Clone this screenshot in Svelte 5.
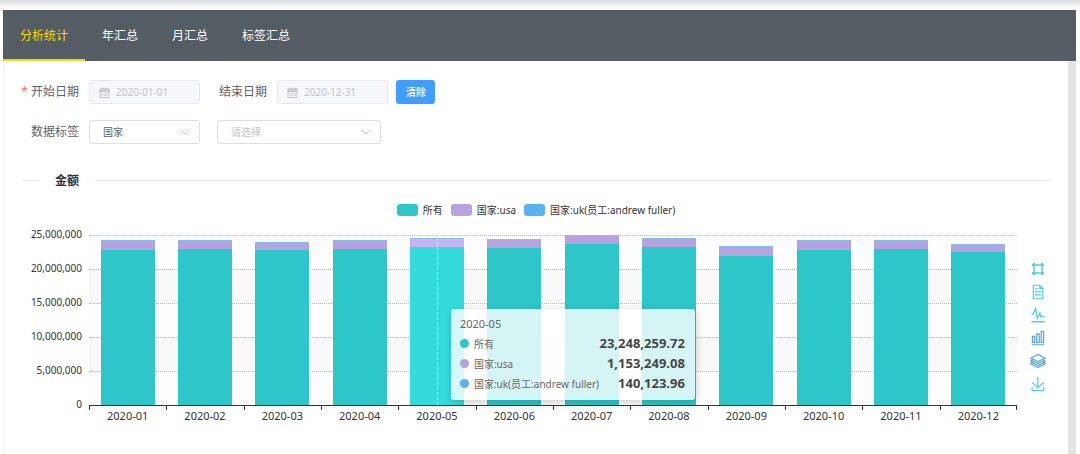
<script>
  const tabs = ['分析统计', '年汇总', '月汇总', '标签汇总'];
  let active = $state(0);

  const series = [
    { key: 'all', name: '所有', value: '23,248,259.72' },
    { key: 'usa', name: '国家:usa', value: '1,153,249.08' },
    { key: 'uk', name: '国家:uk(员工:andrew fuller)', value: '140,123.96' }
  ];

  const max = 25;
  const ticks = ['25,000,000', '20,000,000', '15,000,000', '10,000,000', '5,000,000', '0'];

  // values in millions
  const months = [
    { label: '2020-01', all: 22.84, usa: 1.22, uk: 0.16 },
    { label: '2020-02', all: 22.95, usa: 1.13, uk: 0.16 },
    { label: '2020-03', all: 22.75, usa: 1.15, uk: 0.14 },
    { label: '2020-04', all: 22.93, usa: 1.2, uk: 0.14 },
    { label: '2020-05', all: 23.25, usa: 1.15, uk: 0.14 },
    { label: '2020-06', all: 23.1, usa: 1.2, uk: 0.14 },
    { label: '2020-07', all: 23.75, usa: 1.1, uk: 0.14 },
    { label: '2020-08', all: 23.27, usa: 1.13, uk: 0.16 },
    { label: '2020-09', all: 21.98, usa: 1.2, uk: 0.14 },
    { label: '2020-10', all: 22.86, usa: 1.2, uk: 0.14 },
    { label: '2020-11', all: 22.95, usa: 1.15, uk: 0.14 },
    { label: '2020-12', all: 22.45, usa: 1.1, uk: 0.14 }
  ];
  const hovered = 4;
  const pct = (v) => `${(v / max) * 100}%`;

  const tools = [
    { name: '数据视图', on: false, box: '2 1 58 58', d: 'M17.5,17.3H33 M45.4,29.5h-28 M11.5,2v56H51V14.8L38.4,2H11.5z M38.4,2.2v12.7H51 M45.4,41.7h-28' },
    { name: '切换为折线图', on: false, box: '3 5 54 54', d: 'M4.1,28.9h7.1l9.3-22l7.4,38l9.7-19.7l3,12.8h14.9M4.1,58h51.4' },
    { name: '切换为柱状图', on: true, box: '1 1 58 58', d: 'M6.7,22.9h10V48h-10V22.9zM24.9,13h10v35h-10V13zM43.2,2h10v46h-10V2zM3.1,58h53.7' },
    { name: '切换为堆叠', on: true, box: '0 0 60 60', d: 'M8.2,38.4l-8.4,4.1l30.6,15.3L60,42.5l-8.1-4.1l-21.5,11L8.2,38.4z M51.9,30l-8.1,4.2l-13.4,6.9l-13.9-6.9L8.2,30l-8.4,4.2l8.4,4.2l22.2,11l21.5-11l8.1-4.2L51.9,30z M51.9,21.7l-8.1,4.2L35.7,30l-5.3,2.8L24.9,30l-8.4-4.1l-8.3-4.2l-8.4,4.2L8.2,30l8.3,4.2l13.9,6.9l13.4-6.9l8.1-4.2l8.1-4.1L51.9,21.7zM30.4,2.2L-0.2,17.5l8.4,4.1l8.3,4.2l8.4,4.2l5.5,2.7l5.3-2.7l8.1-4.2l8.1-4.2l8.1-4.1L30.4,2.2z' },
    { name: '保存为图片', on: false, box: '0 0 60 60', d: 'M4.7,22.9L29.3,45.5L54.7,23.4M4.6,43.6L4.6,58L53.8,58L53.8,43.6M29.2,45.1L29.2,0' }
  ];
</script>

{#snippet calendar()}
  <svg class="cal" viewBox="0 0 11 11" aria-hidden="true">
    <path d="M1 2h9v8.500H1zM1 4.500h9M3.500.5v2M7.500.5v2M2.500 6.500h1.500M5 6.500h1.500M7.500 6.500h1.500M2.500 8.500h1.500M5 8.500h1.500M7.500 8.500h1.500" />
    <path class="head" d="M1 2h9v2H1z" />
  </svg>
{/snippet}

{#snippet chevron()}
  <svg class="chev" viewBox="0 0 10 6" aria-hidden="true"><path d="M.5.5 5 5 9.500.5" /></svg>
{/snippet}

<div class="page">
  <nav>
    {#each tabs as tab, i}
      <button class="tab" class:active={active === i} onclick={() => (active = i)}>{tab}</button>
    {/each}
  </nav>

  <main>
    <form onsubmit={(e) => e.preventDefault()}>
      <div class="row">
        <label class="required" for="start">开始日期</label>
        <div class="field disabled">
          {@render calendar()}
          <input id="start" type="text" value="2020-01-01" disabled />
        </div>
        <label class="second" for="end">结束日期</label>
        <div class="field disabled">
          {@render calendar()}
          <input id="end" type="text" value="2020-12-31" disabled />
        </div>
        <button class="clear" type="button">清除</button>
      </div>
      <div class="row">
        <label for="tag">数据标签</label>
        <div class="field">
          <select id="tag"><option>国家</option></select>
          {@render chevron()}
        </div>
        <div class="field wide">
          <select class="empty" aria-label="请选择"><option>请选择</option></select>
          {@render chevron()}
        </div>
      </div>
    </form>

    <h2>金额</h2>

    <section class="chart">
      <ul class="legend">
        {#each series as s}
          <li><i class={s.key}></i>{s.name}</li>
        {/each}
      </ul>

      <div class="area">
        <div class="yaxis">
          {#each ticks as t}<span>{t}</span>{/each}
        </div>

        <div class="plot">
          <div class="canvas">
            <div class="bands">
              {#each { length: 5 } as _}<div></div>{/each}
            </div>
            <div class="columns">
              {#each months as m, i}
                <div class="column" class:hovered={i === hovered}>
                  <div class="bar uk" style:height={pct(m.uk)}></div>
                  <div class="bar usa" style:height={pct(m.usa)}></div>
                  <div class="bar all" style:height={pct(m.all)}></div>
                </div>
              {/each}
            </div>
            <div class="tooltip">
              <p>2020-05</p>
              {#each series as s}
                <div class="item"><i class={s.key}></i><span>{s.name}</span><b>{s.value}</b></div>
              {/each}
            </div>
          </div>
          <div class="xaxis">
            {#each months as m}<span>{m.label}</span>{/each}
          </div>
        </div>

        <div class="tools">
          <button aria-label="区域选择">
            <svg viewBox="0 0 14 14">
              <path class="frame" d="M3 3h8v8H3z" />
              <path class="corner" d="M1 2h3v2H1zM2 1h2v3H2zM10 2h3v2h-3zM10 1h2v3h-2zM1 10h3v2H1zM2 10h2v3H2zM10 10h3v2h-3zM10 10h2v3h-2z" />
            </svg>
          </button>
          {#each tools as t}
            <button aria-label={t.name} class:on={t.on}>
              <svg viewBox={t.box}><path class="large" d={t.d} /></svg>
            </button>
          {/each}
        </div>
      </div>
    </section>
  </main>
</div>

<style>
  :global(body) {
    background: #fff;
  }
  .page {
    padding: 10px 4px 0 3px;
    background: linear-gradient(#dadada, #f4f4f4 6px, #fff 10px);
    font-family: 'Noto Sans', 'Noto Sans CJK SC', sans-serif;
    font-size: 12px;
    color: #606266;
  }
  button,
  input,
  select {
    margin: 0;
    padding: 0;
    border: 0;
    background: none;
    font: inherit;
    color: inherit;
  }
  nav {
    display: flex;
    height: 51px;
    background: #545c64;
  }
  .tab {
    padding: 1px 17px 0;
    border-bottom: 2px solid transparent;
    color: #fff;
  }
  .tab.active {
    color: #ffd700;
    border-bottom-color: #ffd700;
  }
  main {
    padding: 19px 17px 32px 0;
    border-left: 1px solid #ebeef5;
    border-right: 8px solid #e4e4e4;
    background: #fff;
  }
  form {
    display: grid;
    gap: 16px;
  }
  .row {
    display: flex;
    align-items: center;
    height: 24px;
  }
  label {
    width: 75px;
    margin-right: 10px;
    padding-bottom: 2px;
    text-align: right;
  }
  label.second {
    width: 67px;
  }
  .required::before {
    content: '*';
    margin-right: 3px;
    color: #f56c6c;
  }
  .field {
    position: relative;
    display: flex;
    align-items: center;
    box-sizing: border-box;
    width: 111px;
    height: 24px;
    border: 1px solid #dcdfe6;
    border-radius: 3px;
    font-size: 10px;
  }
  .field.wide {
    width: 164px;
    margin-left: 17px;
  }
  .disabled {
    background: #f5f7fa;
    border-color: #e4e7ed;
    color: #c0c4cc;
  }
  .cal {
    width: 11px;
    height: 11px;
    margin: 0 6px 0 9px;
    fill: none;
    stroke: #c0c4cc;
  }
  .head {
    fill: #d5d8de;
  }
  input {
    flex: 1;
    min-width: 0;
  }
  select {
    width: 100%;
    height: 100%;
    padding: 0 13px;
    appearance: none;
  }
  select.empty {
    color: #c0c4cc;
  }
  .chev {
    position: absolute;
    right: 9px;
    width: 10px;
    height: 6px;
    fill: none;
    stroke: #c0c4cc;
    pointer-events: none;
  }
  .clear {
    height: 24px;
    margin-left: 8px;
    padding: 0 9px 1px 10px;
    border-radius: 3px;
    background: #409eff;
    color: #fff;
    font-size: 10px;
    font-weight: 500;
  }
  h2 {
    display: flex;
    align-items: center;
    gap: 16px;
    height: 20px;
    margin: 26px 0 0 18px;
    font-size: 12px;
    color: #303133;
  }
  h2::before,
  h2::after {
    content: '';
    width: 17px;
    height: 1px;
    background: #e4e7f0;
  }
  h2::after {
    flex: 1;
  }
  .legend {
    display: flex;
    justify-content: center;
    gap: 8px;
    margin: 12px 0 0 17px;
    padding: 0;
    list-style: none;
    font-size: 10px;
    line-height: 16px;
    color: #333;
  }
  .legend li {
    display: flex;
    align-items: center;
    gap: 5px;
  }
  .legend i {
    width: 21px;
    height: 12px;
    border-radius: 3px;
  }
  .all {
    background: #2ec7c9;
  }
  .usa {
    background: #b6a2de;
  }
  .uk {
    background: #5ab1ef;
  }
  .area {
    display: flex;
    margin-top: 17px;
  }
  .yaxis {
    display: flex;
    flex-direction: column;
    justify-content: space-between;
    width: 78px;
    height: 184px;
    margin: -8px 7px 0 0;
    text-align: right;
    font-size: 10px;
    line-height: 14px;
    color: #333;
  }
  .plot {
    flex: 1;
  }
  .canvas {
    position: relative;
    height: 170px;
    border-bottom: 1px solid #333;
  }
  .bands,
  .columns {
    position: absolute;
    inset: 0;
  }
  .bands {
    display: grid;
    grid-template-rows: repeat(5, 1fr);
  }
  .bands div {
    border-top: 1px dotted #bbb;
    background: #fdfdfd;
  }
  .bands div:nth-child(even) {
    background-color: #f9f9f9;
  }
  .columns {
    display: flex;
  }
  .column {
    position: relative;
    flex: 1;
    display: flex;
    flex-direction: column;
    justify-content: flex-end;
    align-items: center;
  }
  .bar {
    width: 70%;
  }
  .bar.uk {
    background: #7fc0f1;
  }
  .hovered .all {
    background: #33dbdd;
  }
  .hovered .usa {
    background: #c8b2f4;
  }
  .hovered::after {
    content: '';
    position: absolute;
    top: 2px;
    bottom: 0;
    left: 50%;
    border-left: 1px dashed #c5f5f5;
  }
  .xaxis {
    display: flex;
    font-size: 11px;
    line-height: 14px;
    color: #333;
    text-align: center;
  }
  .xaxis span {
    flex: 1;
    padding-top: 3px;
    background: linear-gradient(#333, #333) 0 0 / 1px 4px no-repeat;
  }
  .xaxis span:last-child {
    background:
      linear-gradient(#333, #333) 0 0 / 1px 4px no-repeat,
      linear-gradient(#333, #333) 100% 0 / 1px 4px no-repeat;
  }
  .tooltip {
    position: absolute;
    left: 39%;
    bottom: 5px;
    box-sizing: border-box;
    width: 244px;
    padding: 6px 10px 7px 9px;
    border-radius: 3px;
    background: rgba(255, 255, 255, 0.8);
    box-shadow: 1px 2px 8px rgba(0, 0, 0, 0.2);
    font-size: 10px;
    color: #666;
  }
  .tooltip p {
    margin: 0;
    font-size: 11px;
    line-height: 18px;
  }
  .item {
    display: flex;
    align-items: center;
    gap: 5px;
    height: 20px;
  }
  .item i {
    width: 9px;
    height: 9px;
    border-radius: 50%;
  }
  .item b {
    margin-left: auto;
    font-size: 13px;
    color: #464646;
  }
  .tools {
    display: grid;
    align-content: start;
    gap: 9px;
    width: 14px;
    margin: 27px 6px 0 14px;
  }
  .tools button {
    height: 14px;
    color: #4fd0d2;
  }
  .tools button.on {
    color: #5aa6d0;
  }
  .tools svg {
    display: block;
    width: 14px;
    height: 14px;
    fill: none;
    stroke: currentColor;
    overflow: visible;
  }
  .large {
    stroke-width: 5;
  }
  .tools .frame {
    stroke-width: 1.5;
  }
  .tools .corner {
    fill: currentColor;
    stroke: none;
  }
</style>
